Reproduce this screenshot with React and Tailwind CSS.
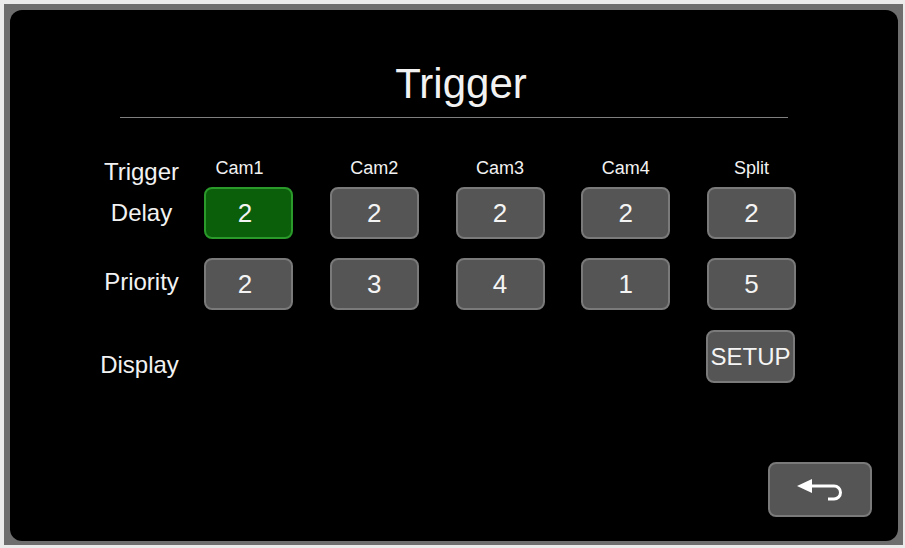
const cams = ['Cam1', 'Cam2', 'Cam3', 'Cam4', 'Split'];
const delays = [2, 2, 2, 2, 2];
const priorities = [2, 3, 4, 1, 5];

const Btn = ({ children, active, first }) => (
  <button
    className={
      (active
        ? 'border-[#2a9a2a] bg-[#0b5f0b] '
        : 'border-[#7a7a7a] bg-[#555555] ') +
      (first ? 'pr-[7px] ' : '') +
      'flex h-[52px] w-[89px] items-center justify-center whitespace-nowrap rounded-[8px] border-2 text-[26px] leading-none text-[#f4f4f4]'
    }
  >
    {children}
  </button>
);

const BackIcon = () => (
  <svg width="48" height="24" viewBox="0 0 48 24" fill="none">
    <polygon points="0,7 15,0 15,14" fill="#ffffff" />
    <path d="M14 7 H37 A6.5 6.5 0 0 1 37 20 H31" stroke="#ffffff" strokeWidth="3" />
  </svg>
);

export default function App() {
  return (
    <div className="h-[548px] w-[905px] bg-[#ebebeb] pb-[3px] pl-[4px] pr-[2px] pt-[4px] font-['Liberation_Sans',Arial,sans-serif]">
      <div className="flex h-full w-full bg-[#6e6e6e] pb-[4px] pl-[6px] pr-[5px] pt-[6px]">
        <div className="flex flex-1 flex-col rounded-[12px] bg-black text-[#f2f2f2]">
          <h1 className="pl-[14px] pt-[50px] text-center text-[42px] leading-[47px]">Trigger</h1>
          <div className="mx-[110px] mt-[10px] h-px bg-[#7f7f7f]" />

          <div className="mt-[40px] flex flex-col pl-[69px]">
            {/* header */}
            <div className="flex h-[29px] items-start">
              <div className="w-[125px] pt-[1px] text-center text-[24px] leading-[26px]">Trigger</div>
              <div className="flex gap-x-[36.75px]">
                {cams.map((c, i) => (
                  <div
                    key={c}
                    className={(i === 0 ? 'pr-[18px] ' : '') + 'w-[89px] text-center text-[18px] leading-[21px]'}
                  >
                    {c}
                  </div>
                ))}
              </div>
            </div>

            {/* delay */}
            <div className="flex items-center">
              <div className="w-[125px] text-center text-[24px] leading-[26px]">Delay</div>
              <div className="flex gap-x-[36.75px]">
                {delays.map((d, i) => (
                  <Btn key={i} active={i === 0} first={i === 0}>
                    {d}
                  </Btn>
                ))}
              </div>
            </div>

            {/* priority */}
            <div className="mt-[19px] flex items-center">
              <div className="w-[125px] pb-[4px] text-center text-[24px] leading-[26px]">Priority</div>
              <div className="flex gap-x-[36.75px]">
                {priorities.map((p, i) => (
                  <Btn key={i} first={i === 0}>
                    {p}
                  </Btn>
                ))}
              </div>
            </div>

            {/* display */}
            <div className="mt-[20px] flex items-start">
              <div className="w-[125px] pr-[4px] pt-[22px] text-center text-[24px] leading-[26px]">Display</div>
              <div className="ml-[502px]">
                <button className="flex h-[53px] w-[89px] items-center justify-center whitespace-nowrap rounded-[8px] border-2 border-[#7a7a7a] bg-[#555555] text-[24px] leading-none text-[#f4f4f4]">
                  SETUP
                </button>
              </div>
            </div>
          </div>

          <div className="mt-auto flex justify-end pb-[24px] pr-[26px]">
            <button className="flex h-[55px] w-[104px] items-center justify-center rounded-[8px] border-2 border-[#7a7a7a] bg-[#555555] pl-[2px] pt-[2px]">
              <BackIcon />
            </button>
          </div>
        </div>
      </div>
    </div>
  );
}
